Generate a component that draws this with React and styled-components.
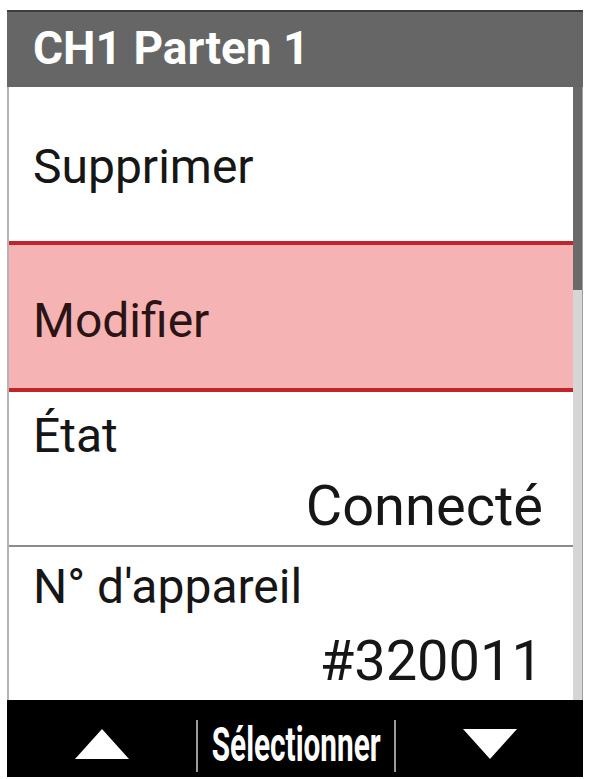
import React from "react";
import styled, { createGlobalStyle } from "styled-components";

const GlobalStyle = createGlobalStyle`
  html, body {
    margin: 0;
    padding: 0;
    background: #ffffff;
    font-family: Roboto, "Liberation Sans", sans-serif;
  }
`;

// Device screen frame
const Screen = styled.div`
  margin: 10px 0 0 7px;
  width: 576px;
  display: flex;
  flex-direction: column;
`;

const Header = styled.div`
  height: 75px;
  background: #666666;
  border-top: 2px solid #3c3c3c;
  color: #ffffff;
  font-size: 46px;
  font-weight: 700;
  line-height: 46px;
  padding: 13px 0 0 26px;
  box-sizing: border-box;
  height: 77px;
`;

const Body = styled.div`
  display: flex;
  height: 613px;
`;

const List = styled.div`
  flex: 1;
  display: flex;
  flex-direction: column;
  border-left: 2px solid #b4b4b4;
  background: #ffffff;
`;

const Row = styled.div`
  height: ${(p) => p.$height}px;
  box-sizing: border-box;
  display: flex;
  align-items: center;
  padding: ${(p) => p.$pad || 0}px 30px 0 24px;
  font-size: 48px;
  line-height: 48px;
  color: #161616;
`;

const SelectedRow = styled(Row)`
  background: #f5b3b3;
  border-top: 4px solid #c3232b;
  border-bottom: 4px solid #c3232b;
  color: #2a1414;
`;

const InfoRow = styled.div`
  height: 153px;
  box-sizing: border-box;
  display: flex;
  flex-direction: column;
  padding: ${(p) => p.$top}px 30px 0 24px;
  gap: ${(p) => p.$gap}px;
`;

const Label = styled.div`
  font-size: 48px;
  line-height: 48px;
  color: #161616;
`;

const Value = styled.div`
  align-self: flex-end;
  font-size: 56px;
  line-height: 56px;
  color: #161616;
`;

const Divider = styled.div`
  height: 2px;
  background: #8c8c8c;
`;

const ScrollTrack = styled.div`
  width: 10px;
  background: #d6d6d6;
  border-right: 1px solid #a0a0a0;
  box-sizing: border-box;
  display: flex;
  flex-direction: column;
`;

const ScrollThumb = styled.div`
  height: 203px;
  background: #6a6a6a;
`;

const BottomBar = styled.div`
  height: 77px;
  background: #000000;
  display: grid;
  grid-template-columns: 189px 2px 196px 2px 1fr;
  align-items: center;
`;

const Cell = styled.div`
  display: flex;
  align-items: center;
  justify-content: center;
  height: 100%;
  padding-top: ${(p) => p.$top || 0}px;
  box-sizing: border-box;
`;

const Separator = styled.div`
  width: 2px;
  height: 52px;
  background: #9a9a9a;
  margin-top: 14px;
`;

const ActionText = styled.span`
  display: inline-block;
  color: #ffffff;
  font-size: 48px;
  font-weight: 700;
  line-height: 48px;
  transform: scaleX(0.62);
  white-space: nowrap;
`;

const Arrow = ({ down }) => (
  <svg width="54" height="30" viewBox="0 0 54 30">
    <polygon
      points={down ? "0,0 54,0 27,30" : "27,0 54,30 0,30"}
      fill="#ffffff"
    />
  </svg>
);

const App = () => (
  <>
    <GlobalStyle />
    <Screen>
      <Header>CH1 Parten 1</Header>
      <Body>
        <List>
          <Row $height={154} $pad={6}>Supprimer</Row>
          <SelectedRow $height={151} $pad={8}>Modifier</SelectedRow>
          <InfoRow $top={20} $gap={18}>
            <Label>État</Label>
            <Value>Connecté</Value>
          </InfoRow>
          <Divider />
          <InfoRow $top={16} $gap={22}>
            <Label>N° d'appareil</Label>
            <Value>#320011</Value>
          </InfoRow>
        </List>
        <ScrollTrack>
          <ScrollThumb />
        </ScrollTrack>
      </Body>
      <BottomBar>
        <Cell $top={10}>
          <Arrow />
        </Cell>
        <Separator />
        <Cell $top={12}>
          <ActionText>Sélectionner</ActionText>
        </Cell>
        <Separator />
        <Cell $top={10}>
          <Arrow down />
        </Cell>
      </BottomBar>
    </Screen>
  </>
);

export default App;
